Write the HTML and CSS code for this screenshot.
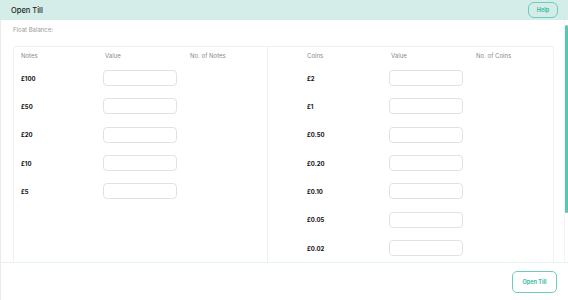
FILE: index.html
```html
<!DOCTYPE html>
<html lang="en">

<head>
    <meta charset="UTF-8">
    <meta name="viewport" content="width=device-width, initial-scale=1.0">
    <title>Open Till</title>
    <link rel="stylesheet" href="styles.css">
</head>

<body>
    <div class="modal">
        <div class="modal-head">
            <h1 class="title">Open Till</h1>
            <button class="btn help">Help</button>
        </div>
        <div class="modal-body">
            <p class="float">Float Balance:</p>
            <div class="card">
                <div class="half notes">
                    <div class="row head">
                        <span>Notes</span>
                        <span class="val">Value</span>
                        <span>No. of Notes</span>
                    </div>
                    <div class="row"><b>£100</b><input type="text"><span></span></div>
                    <div class="row"><b>£50</b><input type="text"><span></span></div>
                    <div class="row"><b>£20</b><input type="text"><span></span></div>
                    <div class="row"><b>£10</b><input type="text"><span></span></div>
                    <div class="row"><b>£5</b><input type="text"><span></span></div>
                </div>
                <div class="half coins">
                    <div class="row head">
                        <span>Coins</span>
                        <span class="val">Value</span>
                        <span>No. of Coins</span>
                    </div>
                    <div class="row"><b>£2</b><input type="text"><span></span></div>
                    <div class="row"><b>£1</b><input type="text"><span></span></div>
                    <div class="row"><b>£0.50</b><input type="text"><span></span></div>
                    <div class="row"><b>£0.20</b><input type="text"><span></span></div>
                    <div class="row"><b>£0.10</b><input type="text"><span></span></div>
                    <div class="row"><b>£0.05</b><input type="text"><span></span></div>
                    <div class="row"><b>£0.02</b><input type="text"><span></span></div>
                </div>
            </div>
            <div class="scroll-track"><div class="scroll-thumb"></div></div>
        </div>
        <div class="modal-foot">
            <button class="btn open">Open Till</button>
        </div>
    </div>
</body>

</html>
```

FILE: styles.css
```css
*{
    margin: 0;
    padding: 0;
    box-sizing: border-box;
}
body{
    font-family: Inter, "Noto Sans", sans-serif;
    background-color: #fff;
    color: #111;
}
.modal{
    height: 300px;
    width: 568px;
    display: flex;
    flex-direction: column;
}
.modal-head{
    height: 20px;
    background-color: #d5ede8;
    display: flex;
    align-items: center;
    justify-content: space-between;
    padding: 0 10px 0 11px;
}
.title{
    font-size: 7.5px;
    font-weight: 500;
    color: #1a2422;
}
.btn{
    font-family: inherit;
    background: transparent;
    border: 1px solid #6dcdbc;
    color: #3fb9a3;
    font-weight: 700;
    cursor: pointer;
}
.help{
    height: 16px;
    width: 30px;
    border-radius: 6px;
    font-size: 5.5px;
}
.modal-body{
    flex: 1;
    overflow: hidden;
    position: relative;
    border-left: 1px solid #ebebeb;
    padding: 6px 14px 30px 12px;
}
/* custom scrollbar look */
.scroll-track{
    position: absolute;
    top: 0;
    right: 0;
    bottom: 0;
    width: 4px;
    border-left: 1px solid #f3f3f3;
}
.scroll-thumb{
    margin-top: 5px;
    height: 188px;
    width: 3px;
    background: #5cc6b3;
    border-radius: 2px;
}
.float{
    font-size: 6px;
    color: #9a9a9a;
    height: 20px;
}
.card{
    display: flex;
    border: 1px solid #f1f1f1;
    border-radius: 3px;
}
.half{
    padding-bottom: 10px;
}
.notes{
    width: 254px;
    padding-left: 7px;
    border-right: 1px solid #f1f1f1;
}
.coins{
    flex: 1;
    padding-left: 39px;
}
.row{
    display: grid;
    grid-template-columns: 82px 87px 1fr;
    align-items: center;
    height: 28.33px;
    font-size: 6px;
}
.row.head{
    height: 17px;
    color: #8a8a8a;
}
.row b{
    font-weight: 700;
    color: #111;
}
.val{
    padding-left: 2px;
}
.row input{
    width: 74px;
    height: 16px;
    border: 1px solid #e2e2e2;
    border-radius: 4px;
    outline: none;
}
.modal-foot{
    height: 38px;
    border-top: 1px solid #e4f4f0;
    border-left: 1px solid #ebebeb;
    display: flex;
    align-items: center;
    justify-content: flex-end;
    padding-right: 11px;
}
.open{
    height: 22px;
    width: 45px;
    border-radius: 5px;
    font-size: 5.5px;
}
```
